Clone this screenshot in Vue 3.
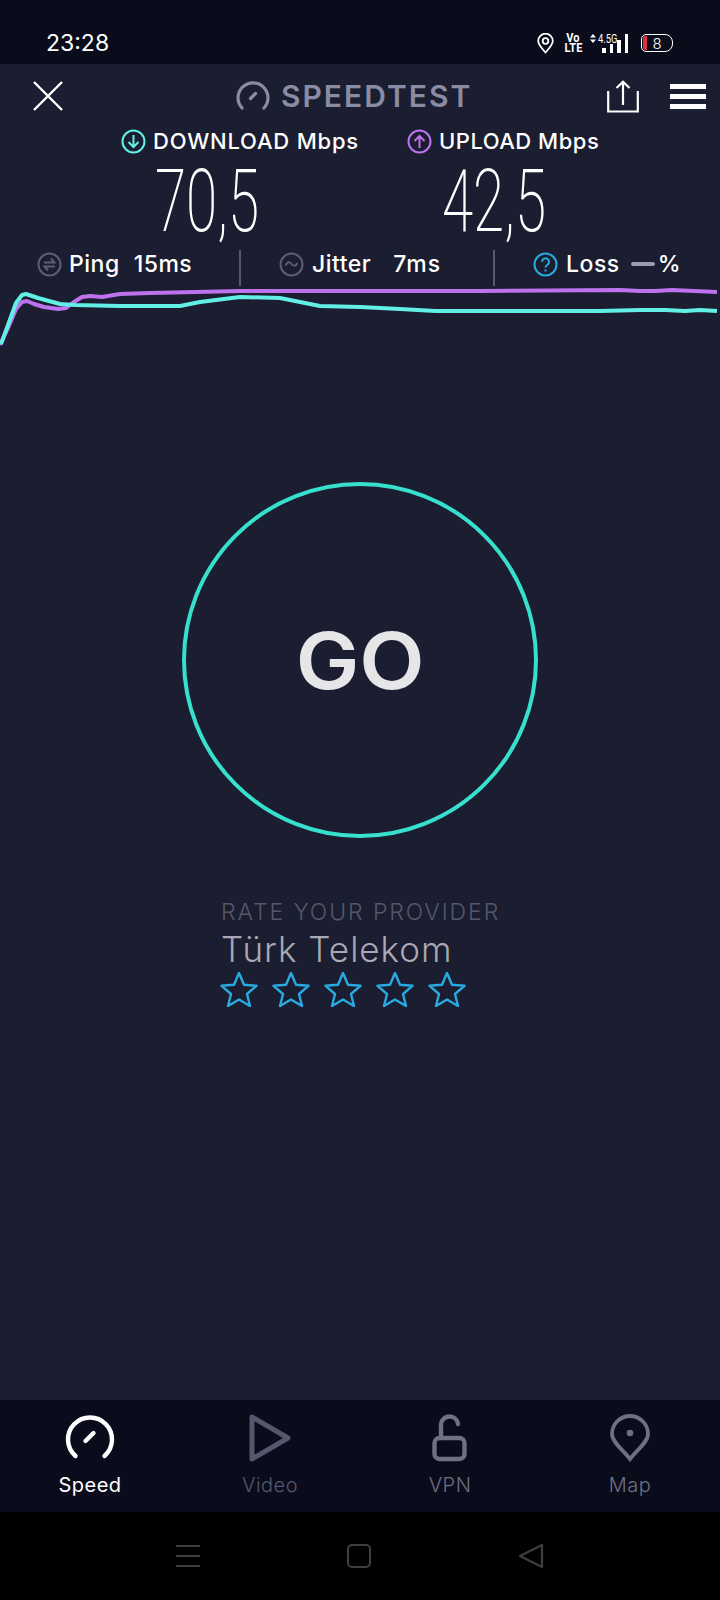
<template>
  <div class="phone">
    <!-- Status bar -->
    <div class="status-bar">
      <span class="clock">23:28</span>
      <div class="status-icons">
        <svg class="st-pin" width="17" height="21" viewBox="0 0 17 21" fill="none" stroke="#fff" stroke-width="1.8">
          <path d="M8.5 19.5C5 15.5 1.2 11.8 1.2 8a7.3 7.3 0 0 1 14.6 0c0 3.8-3.8 7.5-7.3 11.5z" />
          <circle cx="8.5" cy="8" r="2.8" />
        </svg>
        <div class="volte"><span>Vo</span><span>LTE</span></div>
        <div class="signal">
          <div class="signal-top">
            <svg width="6" height="9" viewBox="0 0 6 9" fill="#fff"><path d="M3 0l3 3.4H0zM3 9L0 5.6h6z" /></svg>
            <span class="net">4.5G</span>
          </div>
          <div class="bars">
            <i v-for="b in signalBars" :key="b" :style="{ height: b + 'px' }"></i>
          </div>
        </div>
        <div class="battery">
          <div class="battery-body">
            <i class="battery-low"></i>
            <span>8</span>
          </div>
        </div>
      </div>
    </div>

    <div class="main">
      <!-- Header -->
      <div class="header">
        <svg class="close" width="32" height="32" viewBox="0 0 32 32" stroke="#fff" stroke-width="2.4">
          <path d="M2 2l28 28M30 2L2 30" />
        </svg>
        <div class="title">
          <svg width="34" height="30" viewBox="0 0 34 30" fill="none" stroke="#8a8ca3" stroke-width="3.2" stroke-linecap="round">
            <path d="M6 27a15 15 0 1 1 22 0" />
            <path d="M14.5 17.5l5-5" />
          </svg>
          <span>SPEEDTEST</span>
        </div>
        <svg class="share" width="32" height="33" viewBox="0 0 32 33" fill="none" stroke="#fff" stroke-width="2.2">
          <path d="M1.2 11v20.5h29.6V11" />
          <path d="M16 25V2M9.5 8L16 1.8 22.500 8" />
        </svg>
        <div class="menu"><i></i><i></i><i></i></div>
      </div>

      <!-- Download / upload -->
      <div class="legend">
        <div class="legend-item down">
          <svg width="25" height="25" viewBox="0 0 25 25" fill="none" stroke="#62f0e6" stroke-width="2">
            <circle cx="12.500" cy="12.500" r="11" />
            <path d="M12.500 6v12M7.500 13l5 5 5-5" />
          </svg>
          <span>DOWNLOAD Mbps</span>
        </div>
        <div class="legend-item up">
          <svg width="25" height="25" viewBox="0 0 25 25" fill="none" stroke="#bd73ee" stroke-width="2">
            <circle cx="12.500" cy="12.500" r="11" />
            <path d="M12.500 19V7M7.500 12l5-5 5 5" />
          </svg>
          <span>UPLOAD Mbps</span>
        </div>
      </div>

      <div class="values">
        <div class="value first">70,5</div>
        <div class="value">42,5</div>
      </div>

      <!-- Ping / jitter / loss -->
      <div class="stats">
        <div class="stat stat-ping">
          <svg width="25" height="25" viewBox="0 0 25 25" fill="none" stroke="#5c5e71" stroke-width="2">
            <circle cx="12.500" cy="12.500" r="11" />
            <path d="M7 10.500h10.500L14 6.500M18 14.500H7.500L11 18.500" />
          </svg>
          <span class="stat-name">Ping</span>
          <span class="stat-val">15ms</span>
        </div>
        <div class="stat stat-jitter">
          <svg width="25" height="25" viewBox="0 0 25 25" fill="none" stroke="#5c5e71" stroke-width="2">
            <circle cx="12.500" cy="12.500" r="11" />
            <path d="M6.500 13.500c2-4 4-4 6-1.500s4 2.500 6-1" />
          </svg>
          <span class="stat-name">Jitter</span>
          <span class="stat-val wide">7ms</span>
        </div>
        <div class="stat stat-loss">
          <svg width="25" height="25" viewBox="0 0 25 25" fill="none" stroke="#29abe2" stroke-width="2">
            <circle cx="12.500" cy="12.500" r="11" />
            <path d="M9 9.800a3.500 3.500 0 1 1 5.500 2.900c-1.300.9-2 1.500-2 2.900" />
            <path d="M12.500 17.500v2" />
          </svg>
          <span class="stat-name">Loss</span>
          <i class="dash"></i>
          <span class="percent">%</span>
        </div>
      </div>

      <!-- Speed graph -->
      <svg class="graph" width="720" height="70" viewBox="0 285 720 70" fill="none" stroke-width="4" stroke-linejoin="round">
        <polyline stroke="#bd73ee" :points="uploadLine" />
        <polyline stroke="#62f0e6" :points="downloadLine" />
      </svg>

      <!-- GO button -->
      <div class="go"><span>GO</span></div>

      <!-- Provider rating -->
      <div class="rate">
        <div class="rate-title">RATE YOUR PROVIDER</div>
        <div class="provider">Türk Telekom</div>
        <div class="stars">
          <svg v-for="n in 5" :key="n" width="38" height="36" viewBox="0 0 38 36" fill="none" stroke="#29abe2" stroke-width="2.4" stroke-linejoin="round">
            <path d="M19 2l5 11.800 12.500 1-9.500 8.200 3 12-11-6.500L8 35l3-12-9.500-8.200 12.500-1z" />
          </svg>
        </div>
      </div>
    </div>

    <!-- Tab bar -->
    <div class="tabs">
      <div class="tab active">
        <svg width="50" height="44" viewBox="0 0 50 44" fill="none" stroke="#fff" stroke-width="4.4" stroke-linecap="round">
          <path d="M10.500 40a22 22 0 1 1 29 0" />
          <path d="M20.500 25l8-8" />
        </svg>
        <span>Speed</span>
      </div>
      <div class="tab">
        <svg width="42" height="48" viewBox="0 0 42 48" fill="none" stroke="#55576c" stroke-width="5" stroke-linejoin="round">
          <path d="M3 3l36 21L3 45z" />
        </svg>
        <span>Video</span>
      </div>
      <div class="tab">
        <svg width="36" height="48" viewBox="0 0 36 48" fill="none" stroke="#6f7082" stroke-width="4.4" stroke-linecap="round">
          <rect x="2.500" y="24" width="30" height="21" rx="5" />
          <path d="M9 24V11a8.500 8.500 0 0 1 8.500-8.500c4.500 0 8 3 8.500 7.500" />
        </svg>
        <span>VPN</span>
      </div>
      <div class="tab">
        <svg width="40" height="48" viewBox="0 0 40 48" fill="none" stroke="#6f7082" stroke-width="3.8">
          <path d="M20 45C13 36 2 28 2 20a18 18 0 0 1 36 0c0 8-11 16-18 25z" />
          <circle cx="20" cy="19" r="3.300" fill="#6f7082" stroke="none" />
        </svg>
        <span>Map</span>
      </div>
    </div>

    <!-- System navigation -->
    <div class="sys-nav">
      <svg width="26" height="24" viewBox="0 0 26 24" stroke="#3f3f3f" stroke-width="2">
        <path d="M1 2h24M1 12h24M1 22h24" />
      </svg>
      <svg width="26" height="26" viewBox="0 0 26 26" fill="none" stroke="#3f3f3f" stroke-width="2">
        <rect x="2" y="2" width="22" height="22" rx="4" />
      </svg>
      <svg width="28" height="28" viewBox="0 0 28 28" fill="none" stroke="#3f3f3f" stroke-width="2.2" stroke-linejoin="round">
        <path d="M25 3v22L3 14z" />
      </svg>
    </div>
  </div>
</template>

<script setup>
const signalBars = [5, 9, 13, 19]

const toPoints = (list) => list.map((p) => p.join(",")).join(" ")

const uploadLine = toPoints([
  [0, 345], [8, 328], [16, 309], [22, 302], [27, 301], [34, 304], [44, 307], [58, 309],
  [66, 308], [74, 302], [82, 297], [90, 296], [102, 297], [120, 294], [150, 293],
  [240, 291], [360, 291], [480, 291], [620, 290], [640, 291], [655, 291], [672, 290], [717, 292],
])

const downloadLine = toPoints([
  [1, 344], [8, 325], [16, 303], [22, 295], [26, 294], [38, 298], [60, 304], [75, 305],
  [120, 306], [180, 306], [200, 302], [240, 297], [280, 298], [300, 302], [320, 306],
  [360, 307], [400, 309], [435, 311], [600, 311], [640, 310], [665, 310], [685, 311], [700, 310], [717, 311],
])
</script>

<style>
html,
body {
  background: #000;
}
</style>

<style scoped>
.phone {
  width: 720px;
  height: 1600px;
  display: flex;
  flex-direction: column;
  overflow: hidden;
  font-family: Inter, "Noto Sans", sans-serif;
  color: #fff;
}

.status-bar {
  height: 64px;
  flex-shrink: 0;
  background: #0a0c1b;
  display: flex;
  justify-content: space-between;
  align-items: flex-end;
  padding: 0 47px 7px 46px;
  box-sizing: border-box;
}

.clock {
  font-size: 23px;
  line-height: 28px;
}

.status-icons {
  display: flex;
  align-items: center;
  height: 28px;
}

.st-pin {
  margin-right: 11px;
}

.volte {
  display: flex;
  flex-direction: column;
  align-items: center;
  width: 16px;
  margin-right: 9px;
  font-family: Roboto, sans-serif;
  font-weight: 700;
  font-size: 13px;
  line-height: 10px;
}

.volte span {
  transform: scaleX(0.85);
}

.signal {
  width: 38px;
  height: 20px;
  position: relative;
  margin-right: 13px;
}

.signal-top {
  display: flex;
  align-items: center;
  gap: 2px;
  height: 10px;
}

.net {
  font-family: Roboto, sans-serif;
  font-size: 13px;
  transform: scaleX(0.72);
  transform-origin: left;
}

.bars {
  position: absolute;
  right: 0;
  bottom: 0;
  display: flex;
  align-items: flex-end;
  gap: 4px;
}

.bars i {
  width: 3.500px;
  background: #fff;
}

.battery-body {
  width: 32px;
  height: 18px;
  border: 1.500px solid #fff;
  border-radius: 5px 8px 8px 5px;
  display: flex;
  align-items: center;
  justify-content: center;
  position: relative;
  box-sizing: border-box;
  font-size: 15px;
  font-weight: 300;
}

.battery-low {
  position: absolute;
  left: 1px;
  top: 1px;
  bottom: 1px;
  width: 4px;
  background: #d9323e;
  border-radius: 2px 0 0 2px;
}

.main {
  height: 1336px;
  flex-shrink: 0;
  background: #1b1d30;
}

.header {
  height: 60px;
  padding-top: 4px;
  box-sizing: border-box;
  display: flex;
  align-items: center;
  padding-left: 32px;
  padding-right: 14px;
}

.title {
  display: flex;
  align-items: center;
  gap: 11px;
  margin-left: 172px;
  font-size: 30px;
  font-weight: 600;
  color: #8a8ca3;
  letter-spacing: 2px;
}

.share {
  margin-left: auto;
  margin-right: 31px;
}

.menu {
  width: 36px;
  display: flex;
  flex-direction: column;
  gap: 5px;
}

.menu i {
  height: 5px;
  background: #fff;
}

.legend {
  height: 34px;
  display: flex;
  align-items: center;
  padding-left: 121px;
}

.legend-item {
  display: flex;
  align-items: center;
  gap: 7px;
  font-size: 22px;
  font-weight: 500;
  letter-spacing: 0.8px;
  white-space: nowrap;
}

.legend-item.down {
  width: 286px;
}

.legend-item.up {
  letter-spacing: 0.5px;
}

.values {
  height: 76px;
  display: flex;
  padding-left: 155px;
}

.value {
  font-family: Roboto, sans-serif;
  font-weight: 200;
  font-size: 87px;
  line-height: 86px;
  height: 76px;
  transform: scaleX(0.65);
  transform-origin: left;
}

.value.first {
  width: 287px;
}

.stats {
  height: 36px;
  margin-top: 16px;
  display: flex;
}

.stat {
  display: flex;
  align-items: center;
  padding-bottom: 8px;
  font-size: 23px;
  font-weight: 500;
  letter-spacing: 0.5px;
  box-sizing: border-box;
  white-space: nowrap;
}

.stat-ping {
  width: 241px;
  padding-left: 37px;
  border-right: 2px solid #56586b;
}

.stat-jitter {
  width: 254px;
  padding-left: 38px;
  border-right: 2px solid #56586b;
}

.stat-loss {
  padding-left: 38px;
}

.stat-name {
  margin-left: 8px;
}

.stat-ping .stat-name {
  margin-left: 7px;
}

.stat-val {
  margin-left: 14px;
}

.stat-val.wide {
  margin-left: 22px;
  letter-spacing: 1px;
}

.dash {
  width: 24px;
  height: 4px;
  background: #9b9cae;
  border-radius: 2px;
  margin-left: 11px;
}

.percent {
  margin-left: 3px;
}

.graph {
  display: block;
  margin-top: -1px;
}

.go {
  width: 356px;
  height: 356px;
  margin: 127px auto 0;
  box-sizing: border-box;
  border: 4px solid #37e0cd;
  border-radius: 50%;
  display: flex;
  align-items: center;
  justify-content: center;
  font-size: 78px;
  font-weight: 600;
  color: #e6e6e9;
}

.go span {
  transform: scaleX(1.09);
}

.rate {
  margin-top: 60px;
  padding-left: 221px;
}

.rate-title {
  font-size: 23px;
  line-height: 28px;
  font-weight: 300;
  color: #55576a;
  letter-spacing: 1.9px;
  white-space: nowrap;
}

.provider {
  font-size: 35px;
  line-height: 44px;
  font-weight: 300;
  color: #a8a9b3;
  letter-spacing: 1px;
  margin-top: 1px;
}

.stars {
  display: flex;
  gap: 14px;
  margin-left: -1px;
}

.tabs {
  height: 112px;
  flex-shrink: 0;
  background: #0a0c1b;
  display: grid;
  grid-template-columns: repeat(4, 180px);
}

.tab {
  display: flex;
  flex-direction: column;
  align-items: center;
  justify-content: flex-start;
  padding-top: 14px;
  font-size: 20px;
  font-weight: 300;
  letter-spacing: 0.5px;
  color: #55576c;
}

.tab svg {
  height: 48px;
}

.tab span {
  margin-top: 11px;
  line-height: 24px;
}

.tab:nth-child(n + 3) span {
  color: #6f7082;
}

.tab.active {
  color: #fff;
  font-weight: 400;
}

.sys-nav {
  height: 88px;
  flex-shrink: 0;
  background: #000;
  display: flex;
  align-items: center;
  padding-left: 175px;
  gap: 145px;
}
</style>
